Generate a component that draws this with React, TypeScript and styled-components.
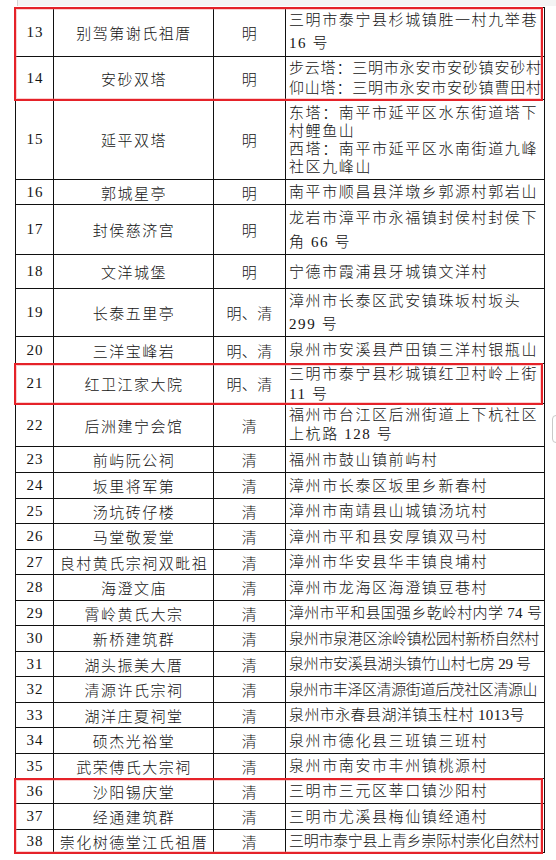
import React from 'react';
import styled, { createGlobalStyle } from 'styled-components';

const GlobalStyle = createGlobalStyle`
  html, body {
    margin: 0;
    padding: 0;
    background: #fff;
  }
  * {
    box-sizing: border-box;
  }
`;

const Page = styled.div`
  width: 556px;
  height: 860px;
  position: relative;
  overflow: hidden;
  background: #fff;
  font-family: 'Liberation Serif', 'Noto Sans CJK SC', serif;
  font-weight: 300;
  color: #141414;
`;

const PageEdge = styled.div`
  height: 6px;
  margin-left: 17px;
  border-left: 1px solid #d4d4d4;
  background: #f4f4f4;
`;

const Table = styled.div`
  width: 530px;
  margin: 1px 0 0 15px;
  border-left: 1px solid #111;
  border-top: 1px solid #111;
  display: flex;
  flex-direction: column;
`;

const Marked = styled.div`
  position: relative;
  display: flex;
  flex-direction: column;
  &::after {
    content: '';
    position: absolute;
    top: -1px;
    left: -2px;
    right: 2px;
    bottom: -1px;
    border: 2px solid #e52229;
    box-shadow: inset 0 0 0 1px rgba(240, 120, 120, 0.35);
    pointer-events: none;
  }
`;

const Row = styled.div<{ $h: number }>`
  display: grid;
  grid-template-columns: 38px 160px 72px 259px;
  height: ${p => p.$h}px;
`;

const Cell = styled.div`
  display: flex;
  align-items: center;
  border-right: 1px solid #111;
  border-bottom: 1px solid #111;
  font-size: 15px;
  white-space: nowrap;
  overflow: hidden;
`;

const NumCell = styled(Cell)`
  justify-content: center;
  letter-spacing: 1px;
  padding-left: 1px;
`;

const NameCell = styled(Cell)`
  justify-content: center;
  letter-spacing: 1.5px;
  padding-left: 1px;
`;

const EraCell = styled(Cell)`
  justify-content: center;
  letter-spacing: 0.3px;
`;

const AddrCell = styled(Cell)<{ $lh: number; $ls: number }>`
  justify-content: flex-start;
  padding-left: 3px;
  line-height: ${p => p.$lh}px;
  letter-spacing: ${p => p.$ls}px;
`;

const AddrLines = styled.div`
  display: flex;
  flex-direction: column;
`;

const SideTab = styled.div`
  position: absolute;
  left: 552px;
  top: 415px;
  width: 20px;
  height: 28px;
  border: 1px solid #c9c9c9;
  border-radius: 4px;
  background: #fff;
`;

type Item = {
  no: number;
  name: string;
  era: string;
  addr: string[];
  h: number;
  lh?: number;
  ls?: number;
};

const M = '明';
const MQ = '明、清';
const Q = '清';

const groups: { mark: boolean; rows: Item[] }[] = [
  {
    mark: true,
    rows: [
      { no: 13, name: '别驾第谢氏祖厝', era: M, addr: ['三明市泰宁县杉城镇胜一村九举巷', '16 号'], h: 49, lh: 23 },
      { no: 14, name: '安砂双塔', era: M, addr: ['步云塔：三明市永安市安砂镇安砂村', '仰山塔：三明市永安市安砂镇曹田村'], h: 43, lh: 20, ls: 0.8 },
    ],
  },
  {
    mark: false,
    rows: [
      { no: 15, name: '延平双塔', era: M, addr: ['东塔：南平市延平区水东街道塔下', '村鲤鱼山', '西塔：南平市延平区水南街道九峰', '社区九峰山'], h: 80, lh: 18 },
      { no: 16, name: '郭城星亭', era: M, addr: ['南平市顺昌县洋墩乡郭源村郭岩山'], h: 25 },
      { no: 17, name: '封侯慈济宫', era: M, addr: ['龙岩市漳平市永福镇封侯村封侯下', '角 66 号'], h: 50, lh: 24 },
      { no: 18, name: '文洋城堡', era: M, addr: ['宁德市霞浦县牙城镇文洋村'], h: 34 },
      { no: 19, name: '长泰五里亭', era: MQ, addr: ['漳州市长泰区武安镇珠坂村坂头', '299 号'], h: 48, lh: 23 },
      { no: 20, name: '三洋宝峰岩', era: MQ, addr: ['泉州市安溪县芦田镇三洋村银瓶山'], h: 27 },
    ],
  },
  {
    mark: true,
    rows: [
      { no: 21, name: '红卫江家大院', era: MQ, addr: ['三明市泰宁县杉城镇红卫村岭上街', '11 号'], h: 40, lh: 20 },
    ],
  },
  {
    mark: false,
    rows: [
      { no: 22, name: '后洲建宁会馆', era: Q, addr: ['福州市台江区后洲街道上下杭社区', '上杭路 128 号'], h: 43, lh: 19 },
      { no: 23, name: '前屿阮公祠', era: Q, addr: ['福州市鼓山镇前屿村'], h: 26 },
      { no: 24, name: '坂里将军第', era: Q, addr: ['漳州市长泰区坂里乡新春村'], h: 26 },
      { no: 25, name: '汤坑砖仔楼', era: Q, addr: ['漳州市南靖县山城镇汤坑村'], h: 25 },
      { no: 26, name: '马堂敬爱堂', era: Q, addr: ['漳州市平和县安厚镇双马村'], h: 26 },
      { no: 27, name: '良村黄氏宗祠双毗祖', era: Q, addr: ['漳州市华安县华丰镇良埔村'], h: 25 },
      { no: 28, name: '海澄文庙', era: Q, addr: ['漳州市龙海区海澄镇豆巷村'], h: 26 },
      { no: 29, name: '霄岭黄氏大宗', era: Q, addr: ['漳州市平和县国强乡乾岭村内学 74 号'], h: 25, ls: 0.3 },
      { no: 30, name: '新桥建筑群', era: Q, addr: ['泉州市泉港区涂岭镇松园村新桥自然村'], h: 26, ls: -0.3 },
      { no: 31, name: '湖头振美大厝', era: Q, addr: ['泉州市安溪县湖头镇竹山村七房 29 号'], h: 25, ls: -0.3 },
      { no: 32, name: '清源许氏宗祠', era: Q, addr: ['泉州市丰泽区清源街道后茂社区清源山'], h: 26, ls: -0.4 },
      { no: 33, name: '湖洋庄夏祠堂', era: Q, addr: ['泉州市永春县湖洋镇玉柱村 1013号'], h: 25, ls: 0.4 },
      { no: 34, name: '硕杰光裕堂', era: Q, addr: ['泉州市德化县三班镇三班村'], h: 26 },
      { no: 35, name: '武荣傅氏大宗祠', era: Q, addr: ['泉州市南安市丰州镇桃源村'], h: 25 },
    ],
  },
  {
    mark: true,
    rows: [
      { no: 36, name: '沙阳锡庆堂', era: Q, addr: ['三明市三元区莘口镇沙阳村'], h: 25 },
      { no: 37, name: '经通建筑群', era: Q, addr: ['三明市尤溪县梅仙镇经通村'], h: 26 },
      { no: 38, name: '崇化树德堂江氏祖厝', era: Q, addr: ['三明市泰宁县上青乡崇际村崇化自然村'], h: 23, ls: -0.3 },
    ],
  },
];

const SiteRow: React.FC<{ item: Item }> = ({ item }) => (
  <Row $h={item.h}>
    <NumCell>{item.no}</NumCell>
    <NameCell>{item.name}</NameCell>
    <EraCell>{item.era}</EraCell>
    <AddrCell $lh={item.lh ?? 20} $ls={item.ls ?? 1.6}>
      <AddrLines>
        {item.addr.map((line, i) => (
          <span key={i}>{line}</span>
        ))}
      </AddrLines>
    </AddrCell>
  </Row>
);

const App: React.FC = () => {
  return (
    <Page>
      <GlobalStyle />
      <PageEdge />
      <Table>
        {groups.map((g, gi) => {
          const rows = g.rows.map(r => <SiteRow key={r.no} item={r} />);
          return g.mark ? <Marked key={gi}>{rows}</Marked> : <React.Fragment key={gi}>{rows}</React.Fragment>;
        })}
      </Table>
      <SideTab />
    </Page>
  );
};

export default App;
